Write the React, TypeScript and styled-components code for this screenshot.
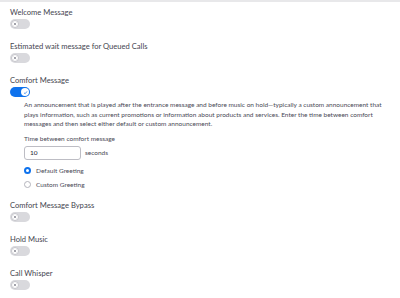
import * as React from 'react';
import styled, { createGlobalStyle } from 'styled-components';

const GlobalStyle = createGlobalStyle`
  html, body {
    margin: 0;
    padding: 0;
    background: #ffffff;
  }
  body {
    font-family: 'Lato', 'Liberation Sans', sans-serif;
    color: #232333;
  }
`;

const Page = styled.div`
  border-top: 2px solid #e8e8ea;
  padding: 5px 10px 0 10px;
  display: flex;
  flex-direction: column;
`;

const Section = styled.div<{ $spacing?: number }>`
  display: flex;
  flex-direction: column;
  align-items: flex-start;
  margin-bottom: ${(p) => p.$spacing ?? 12}px;
`;

const Title = styled.div`
  font-size: 7.6px;
  line-height: 10px;
  color: #45454f;
  margin-bottom: 2px;
`;

const Track = styled.button<{ on?: boolean }>`
  position: relative;
  width: 20px;
  height: 10px;
  padding: 0;
  border: none;
  border-radius: 5px;
  background: ${(p) => (p.on ? '#0e72ed' : '#d9d9dd')};
  cursor: pointer;
`;

const Knob = styled.span<{ on?: boolean }>`
  box-sizing: border-box;
  position: absolute;
  top: 1px;
  left: ${(p) => (p.on ? '11px' : '1px')};
  width: 8px;
  height: 8px;
  border-radius: 50%;
  background: #ffffff;
  border: ${(p) => (p.on ? 'none' : '0.5px solid #c4c4ca')};
  display: flex;
  align-items: center;
  justify-content: center;
`;

const Details = styled.div`
  padding-left: 14px;
  padding-top: 3px;
  display: flex;
  flex-direction: column;
  align-items: flex-start;
`;

const Desc = styled.p`
  margin: 0 0 5px 0;
  font-size: 6.5px;
  line-height: 9.5px;
  color: #4a4a56;
`;

const Label = styled.div`
  font-size: 6.5px;
  line-height: 9px;
  color: #4a4a56;
  margin-bottom: 3px;
`;

const InputRow = styled.div`
  display: flex;
  align-items: center;
  gap: 4px;
  margin-bottom: 4px;
`;

const Input = styled.div`
  box-sizing: border-box;
  width: 57px;
  height: 14px;
  border: 1px solid #bdbdc4;
  border-radius: 3px;
  padding-left: 5px;
  font-size: 6.5px;
  line-height: 12px;
  color: #232333;
`;

const Unit = styled.span`
  font-size: 6.5px;
  color: #4a4a56;
`;

const RadioRow = styled.label`
  display: flex;
  align-items: center;
  gap: 5px;
  height: 14px;
  font-size: 6.5px;
  color: #4a4a56;
`;

const Dot = styled.span<{ checked?: boolean }>`
  box-sizing: border-box;
  width: 7px;
  height: 7px;
  border-radius: 50%;
  background: #ffffff;
  border: ${(p) => (p.checked ? '2px solid #0e72ed' : '1px solid #b4b4bc')};
`;

const Toggle: React.FC<{ on?: boolean }> = ({ on }) => (
  <Track on={on}>
    <Knob on={on}>
      {on ? (
        <svg width="5" height="5" viewBox="0 0 10 10">
          <path d="M2 5.5 L4.2 7.5 L8 2.8" fill="none" stroke="#0e72ed" strokeWidth="1.4" />
        </svg>
      ) : (
        <svg width="4" height="4" viewBox="0 0 10 10">
          <path d="M2 2 L8 8 M8 2 L2 8" stroke="#6e6e7a" strokeWidth="1.6" />
        </svg>
      )}
    </Knob>
  </Track>
);

export default function App() {
  return (
    <>
      <GlobalStyle />
      <Page>
        <Section>
          <Title>Welcome Message</Title>
          <Toggle />
        </Section>
        <Section>
          <Title>Estimated wait message for Queued Calls</Title>
          <Toggle />
        </Section>
        <Section $spacing={8}>
          <Title>Comfort Message</Title>
          <Toggle on />
          <Details>
            <Desc>
              An announcement that is played after the entrance message and before music on hold—typically a
              custom announcement that plays information, such as current promotions or information about products
              and services. Enter the time between comfort messages and then select either default or custom
              announcement.
            </Desc>
            <Label>Time between comfort message</Label>
            <InputRow>
              <Input>10</Input>
              <Unit>seconds</Unit>
            </InputRow>
            <RadioRow>
              <Dot checked />
              Default Greeting
            </RadioRow>
            <RadioRow>
              <Dot />
              Custom Greeting
            </RadioRow>
          </Details>
        </Section>
        <Section>
          <Title>Comfort Message Bypass</Title>
          <Toggle />
        </Section>
        <Section>
          <Title>Hold Music</Title>
          <Toggle />
        </Section>
        <Section>
          <Title>Call Whisper</Title>
          <Toggle />
        </Section>
      </Page>
    </>
  );
}
